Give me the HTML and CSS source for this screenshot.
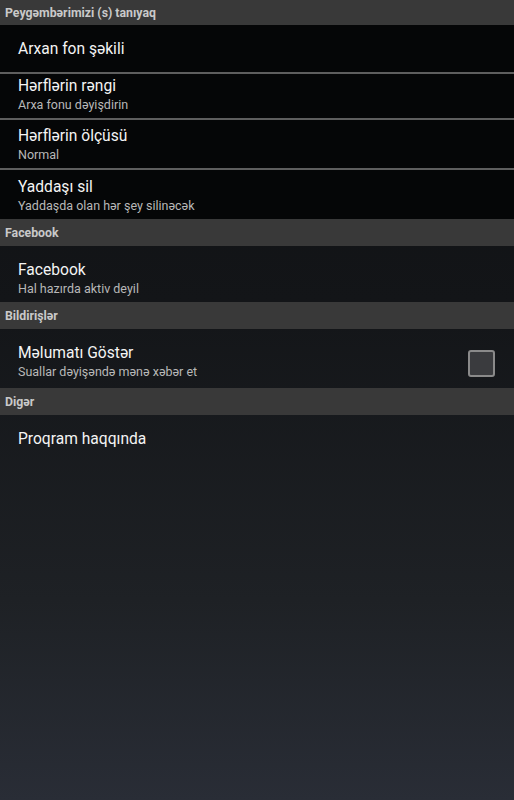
FILE: index.html
```html
<!DOCTYPE html>
<html>
<head>
<meta charset="utf-8">
<link rel="stylesheet" href="styles.css">
</head>
<body>
<div class="screen">
  <div class="cat">Peygəmbərimizi (s) tanıyaq</div>
  <div class="group dark">
    <div class="pref h47 single"><div class="title">Arxan fon şəkili</div></div>
    <div class="sep"></div>
    <div class="pref h44"><div class="title">Hərflərin rəngi</div><div class="sum">Arxa fonu dəyişdirin</div></div>
    <div class="sep"></div>
    <div class="pref h48"><div class="title">Hərflərin ölçüsü</div><div class="sum">Normal</div></div>
    <div class="sep"></div>
    <div class="pref h49"><div class="title">Yaddaşı sil</div><div class="sum">Yaddaşda olan hər şey silinəcək</div></div>
  </div>
  <div class="cat">Facebook</div>
  <div class="pref h56"><div class="title">Facebook</div><div class="sum">Hal hazırda aktiv deyil</div></div>
  <div class="cat">Bildirişlər</div>
  <div class="pref h59 check-row">
    <div class="texts"><div class="title">Məlumatı Göstər</div><div class="sum">Suallar dəyişəndə mənə xəbər et</div></div>
    <div class="checkbox"></div>
  </div>
  <div class="cat">Digər</div>
  <div class="pref h47 single"><div class="title">Proqram haqqında</div></div>
</div>
</body>
</html>
```
FILE: styles.css
```css
* { box-sizing: border-box; }
html, body { margin: 0; padding: 0; }
body {
  width: 514px;
  height: 800px;
  overflow: hidden;
  font-family: Roboto, "Noto Sans", sans-serif;
  background: linear-gradient(to bottom, #0e0f11 0px, #131518 300px, #1e2125 600px, #292d36 800px);
  color: #f2f2f2;
}
.screen { display: flex; flex-direction: column; }
.cat {
  height: 27px;
  background: #393939;
  color: #c9c9c9;
  font-size: 12.3px;
  font-weight: bold;
  padding-left: 5px;
  display: flex;
  align-items: center;
}
.screen > .cat:first-child { height: 25px; }
.group.dark { background: #050607; display: flex; flex-direction: column; }
.sep { height: 2px; background: #5e5e5e; }
.pref {
  display: flex;
  flex-direction: column;
  justify-content: flex-end;
  padding: 0 19px 5px 18px;
}
.pref.single { justify-content: center; padding-bottom: 0; }
.h44 { height: 44px; }
.h47 { height: 47px; }
.h48 { height: 48px; }
.h49 { height: 49px; }
.h56 { height: 56px; }
.h59 { height: 59px; }
.title { font-size: 15.6px; line-height: 20px; color: #f4f4f4; }
.sum { font-size: 12.5px; line-height: 17px; color: #b8b8b8; }
.check-row {
  flex-direction: row;
  align-items: flex-end;
  justify-content: space-between;
  padding-bottom: 0;
}
.check-row .texts { padding-bottom: 8px; }
.checkbox {
  width: 27px;
  height: 27px;
  margin-bottom: 11px;
  border: 2px solid #8a8a8a;
  border-radius: 3px;
  background: #3a3b3e;
}
```
